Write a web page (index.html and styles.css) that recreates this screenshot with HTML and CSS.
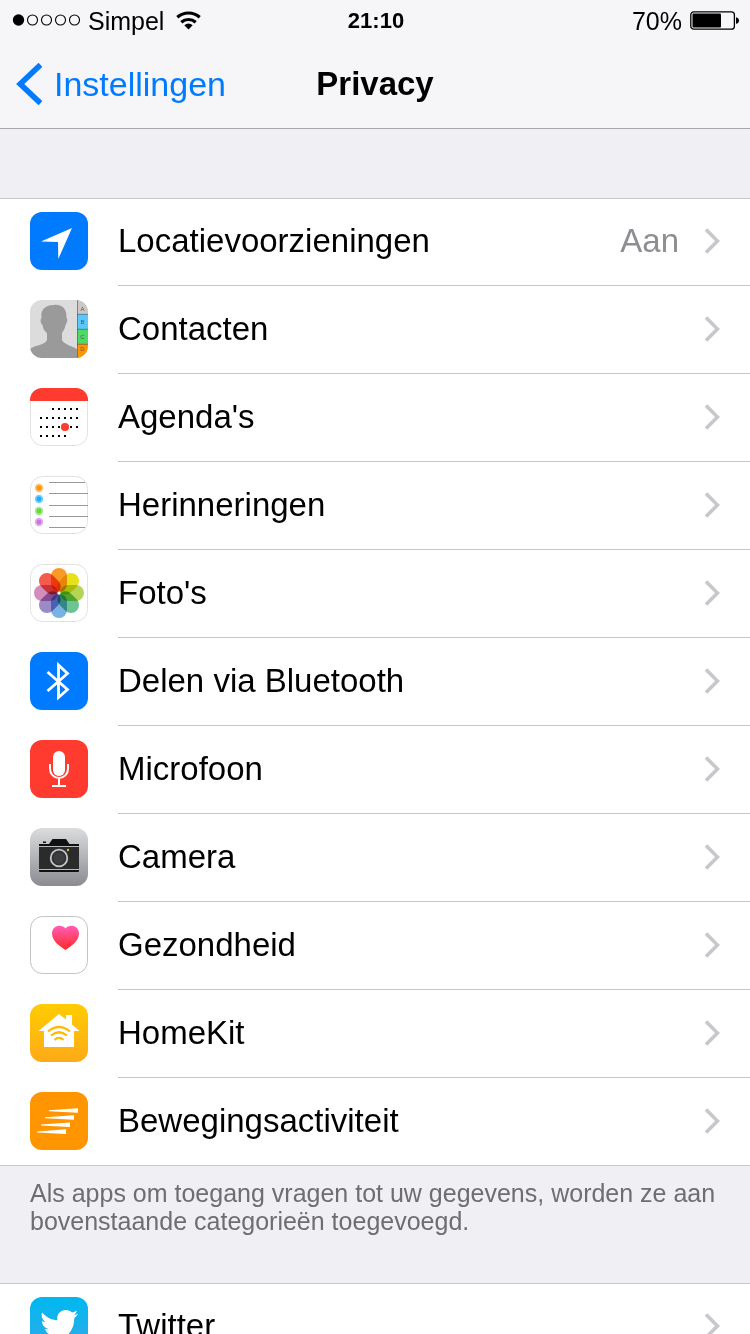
FILE: index.html
```html
<!DOCTYPE html>
<html lang="nl">
<head>
    <meta charset="UTF-8">
    <meta name="viewport" content="width=device-width, initial-scale=1.0">
    <title>Privacy</title>
    <link rel="stylesheet" href="styles.css">
</head>
<body>
    <!-- Shared shapes -->
    <svg class="sprite" aria-hidden="true">
        <symbol id="chevron" viewBox="0 0 16 26">
            <path d="M2 1.5 L13.5 13 L2 24.5" fill="none" stroke="#c7c7cc" stroke-width="3.6"/>
        </symbol>
    </svg>

    <!-- Header -->
    <header class="header">
        <div class="status-bar">
            <div class="carrier">
                <svg class="signal" width="68" height="14" viewBox="0 0 68 14">
                    <circle cx="6.5" cy="6" r="5.7"/>
                    <g fill="none" stroke="#000" stroke-width="1.1">
                        <circle cx="20.5" cy="6" r="5"/>
                        <circle cx="34.5" cy="6" r="5"/>
                        <circle cx="48.5" cy="6" r="5"/>
                        <circle cx="62.5" cy="6" r="5"/>
                    </g>
                </svg>
                <span>Simpel</span>
                <svg class="wifi" width="26" height="20" viewBox="0 0 26 20">
                    <g fill="none" stroke="#000" stroke-width="3.2">
                        <path d="M1.3 6.2 A17 17 0 0 1 23.700 6.2"/>
                        <path d="M5.300 11.200 A11 11 0 0 1 19.700 11.200"/>
                    </g>
                    <path d="M12.500 18.500 L8.300 14.300 A6.5 6.5 0 0 1 16.700 14.300 Z"/>
                </svg>
            </div>
            <span class="clock">21:10</span>
            <div class="battery">
                <span>70%</span>
                <svg width="50" height="20" viewBox="0 0 50 20">
                    <rect x="0.8" y="0.8" width="43.6" height="17.4" rx="3" fill="none" stroke="#000" stroke-width="1.3"/>
                    <rect x="2.5" y="2.5" width="28.5" height="14" rx="1"/>
                    <path d="M46 6.2 C50 6.6 50 12.4 46 12.8 Z"/>
                </svg>
            </div>
        </div>
        <nav class="nav-bar">
            <a class="back" href="#">
                <svg width="26" height="42" viewBox="0 0 26 42">
                    <path d="M24.5 1.800 L4.200 21 L24.5 40.200" fill="none" stroke="#007aff" stroke-width="5.6"/>
                </svg>
                <span>Instellingen</span>
            </a>
            <h1>Privacy</h1>
        </nav>
    </header>

    <!-- Settings list -->
    <main>
        <ul class="group">
            <li><a class="row" href="#">
                <svg class="icon" viewBox="0 0 58 58">
                    <rect width="58" height="58" rx="12" fill="#007aff"/>
                    <path d="M42 16 L11 29.5 L28 30 L28.3 47 Z" fill="#fff"/>
                </svg>
                <span class="cell"><span class="label">Locatievoorzieningen</span><span class="value">Aan</span>
                <svg class="chevron"><use href="#chevron"/></svg></span>
            </a></li>
            <li><a class="row" href="#">
                <svg class="icon" viewBox="0 0 58 58">
                    <clipPath id="tile"><rect width="58" height="58" rx="12"/></clipPath>
                    <g clip-path="url(#tile)">
                        <rect width="58" height="58" fill="#dcdcdc"/>
                        <path d="M24 5 C32 4 37 9 36.5 18 C38 19 37 23 35.5 25 C35 29 33 31 32 33 V40 C34 45 44 46 48 50 V58 H0 V49 C5 45 15 45 17 40 V33 C14 31 13 28 12.5 25 C10.500 23 10 19 11.5 18 C10 9 16 5 24 5 Z" fill="#9a9a9a"/>
                        <rect x="47" width="11" height="14" fill="#cbc8c5"/>
                        <rect x="47" y="14" width="11" height="15" fill="#5ac8fa"/>
                        <rect x="47" y="29" width="11" height="15" fill="#4cd964"/>
                        <rect x="47" y="44" width="11" height="14" fill="#ff9500"/>
                        <path d="M47.500 0 V58 M47 14.300 H58 M47 29.300 H58 M47 44.300 H58" stroke="#555" stroke-opacity="0.6" stroke-width="1"/>
                        <g class="tab-letters">
                            <text x="52.500" y="11">A</text>
                            <text x="52.500" y="24">B</text>
                            <text x="52.500" y="39">C</text>
                            <text x="52.500" y="51">D</text>
                        </g>
                    </g>
                </svg>
                <span class="cell"><span class="label">Contacten</span>
                <svg class="chevron"><use href="#chevron"/></svg></span>
            </a></li>
            <li><a class="row" href="#">
                <svg class="icon" viewBox="0 0 58 58">
                    <rect x="0.5" y="0.5" width="57" height="57" rx="12" fill="#fff" stroke="#e2e2e4"/>
                    <path d="M0 13 V12 A12 12 0 0 1 12 0 H46 A12 12 0 0 1 58 12 V13 Z" fill="#ff3b30"/>
                    <g stroke="#000" stroke-width="2" stroke-dasharray="2 4">
                        <path d="M22 21 H48"/>
                        <path d="M10 30 H48"/>
                        <path d="M10 39 H48"/>
                        <path d="M10 48 H36"/>
                    </g>
                    <circle cx="35" cy="39" r="4.100" fill="#ff3b30"/>
                </svg>
                <span class="cell"><span class="label">Agenda's</span>
                <svg class="chevron"><use href="#chevron"/></svg></span>
            </a></li>
            <li><a class="row" href="#">
                <svg class="icon" viewBox="0 0 58 58">
                    <rect x="0.5" y="0.5" width="57" height="57" rx="12" fill="#fff" stroke="#e2e2e4"/>
                    <path d="M19 6.500 H55 M19 17.500 H58 M19 29.500 H58 M19 40.500 H58 M19 51.500 H55" stroke="#999" stroke-width="1"/>
                    <g fill-opacity="0.6">
                        <circle cx="9" cy="12" r="4.200" fill="#ff9500"/>
                        <circle cx="9" cy="23" r="4.200" fill="#1badf8"/>
                        <circle cx="9" cy="35" r="4.200" fill="#63da38"/>
                        <circle cx="9" cy="46" r="4.200" fill="#cc73e1"/>
                    </g>
                    <circle cx="9" cy="12" r="2.400" fill="#ff9500"/>
                    <circle cx="9" cy="23" r="2.400" fill="#1badf8"/>
                    <circle cx="9" cy="35" r="2.400" fill="#63da38"/>
                    <circle cx="9" cy="46" r="2.400" fill="#cc73e1"/>
                </svg>
                <span class="cell"><span class="label">Herinneringen</span>
                <svg class="chevron"><use href="#chevron"/></svg></span>
            </a></li>
            <li><a class="row" href="#">
                <svg class="icon" viewBox="0 0 58 58">
                    <rect x="0.5" y="0.5" width="57" height="57" rx="12" fill="#fff" stroke="#e2e2e4"/>
                    <g class="petals">
                        <rect x="21" y="4" width="16" height="24" rx="8" fill="#f99a28"/>
                        <rect x="21" y="4" width="16" height="24" rx="8" fill="#e9e01c" transform="rotate(45 29 29)"/>
                        <rect x="21" y="4" width="16" height="24" rx="8" fill="#b5d655" transform="rotate(90 29 29)"/>
                        <rect x="21" y="4" width="16" height="24" rx="8" fill="#6cc394" transform="rotate(135 29 29)"/>
                        <rect x="21" y="4" width="16" height="24" rx="8" fill="#78b2e2" transform="rotate(180 29 29)"/>
                        <rect x="21" y="4" width="16" height="24" rx="8" fill="#9a8bc7" transform="rotate(225 29 29)"/>
                        <rect x="21" y="4" width="16" height="24" rx="8" fill="#d48cbb" transform="rotate(270 29 29)"/>
                        <rect x="21" y="4" width="16" height="24" rx="8" fill="#f45b4c" transform="rotate(315 29 29)"/>
                    </g>
                    <circle cx="29" cy="29" r="1.500" fill="#fff"/>
                </svg>
                <span class="cell"><span class="label">Foto's</span>
                <svg class="chevron"><use href="#chevron"/></svg></span>
            </a></li>
            <li><a class="row" href="#">
                <svg class="icon" viewBox="0 0 58 58">
                    <rect width="58" height="58" rx="12" fill="#007aff"/>
                    <path d="M17.500 20 L37.500 37.500 L28.500 45.500 V13 L37.500 21.500 L17.500 39" fill="none" stroke="#fff" stroke-width="2.800"/>
                </svg>
                <span class="cell"><span class="label">Delen via Bluetooth</span>
                <svg class="chevron"><use href="#chevron"/></svg></span>
            </a></li>
            <li><a class="row" href="#">
                <svg class="icon" viewBox="0 0 58 58">
                    <rect width="58" height="58" rx="12" fill="#ff3b30"/>
                    <rect x="23" y="11" width="12" height="25" rx="6" fill="#fff"/>
                    <path d="M20 24 V29 A9 9 0 0 0 38 29 V24 M29 38 V46 M22 46 H36" fill="none" stroke="#fff" stroke-width="2"/>
                </svg>
                <span class="cell"><span class="label">Microfoon</span>
                <svg class="chevron"><use href="#chevron"/></svg></span>
            </a></li>
            <li><a class="row" href="#">
                <svg class="icon" viewBox="0 0 58 58">
                    <linearGradient id="steel" x2="0" y2="1">
                        <stop offset="0" stop-color="#dbdcdd"/>
                        <stop offset="1" stop-color="#8a8c92"/>
                    </linearGradient>
                    <rect width="58" height="58" rx="12" fill="url(#steel)"/>
                    <path d="M9 18 V16 H19 L22.500 11 H36 L39.500 16 H49 V18 Z M13 13.500 H16 V15 H13 Z" fill="#111"/>
                    <rect x="9" y="19" width="40" height="22" fill="#2b2b2b"/>
                    <path d="M9 18.500 H49 M9 41.500 H49" stroke="#b9babc" stroke-width="1"/>
                    <path d="M9 42 H49 V43 Q49 44 48 44 H10 Q9 44 9 43 Z" fill="#111"/>
                    <circle cx="29" cy="30" r="8.300" fill="#333" stroke="#c4c5c8" stroke-width="1.800"/>
                    <circle cx="29" cy="30" r="5.500" fill="#3c3d3f"/>
                    <circle cx="38" cy="22" r="1.200" fill="#d8b84a"/>
                </svg>
                <span class="cell"><span class="label">Camera</span>
                <svg class="chevron"><use href="#chevron"/></svg></span>
            </a></li>
            <li><a class="row" href="#">
                <svg class="icon" viewBox="0 0 58 58">
                    <linearGradient id="heart" x2="0" y2="1">
                        <stop offset="0" stop-color="#ff5db8"/>
                        <stop offset="1" stop-color="#ff2a24"/>
                    </linearGradient>
                    <rect x="0.5" y="0.5" width="57" height="57" rx="12" fill="#fff" stroke="#c4c4c6"/>
                    <path d="M35.500 34 C31 31 22 25.500 22 17.500 C22 9 32 7.500 35.500 12.500 C39 7.500 49 9 49 17.500 C49 25.500 40 31 35.500 34 Z" fill="url(#heart)"/>
                </svg>
                <span class="cell"><span class="label">Gezondheid</span>
                <svg class="chevron"><use href="#chevron"/></svg></span>
            </a></li>
            <li><a class="row" href="#">
                <svg class="icon" viewBox="0 0 58 58">
                    <linearGradient id="home" x2="0" y2="1">
                        <stop offset="0" stop-color="#ffcc00"/>
                        <stop offset="1" stop-color="#fdaa18"/>
                    </linearGradient>
                    <rect width="58" height="58" rx="12" fill="url(#home)"/>
                    <path d="M29 10 L36 15.500 V11 H42 V20.500 L49.500 27 H44 V43 H14 V27 H8.500 Z" fill="#fff"/>
                    <g fill="none" stroke="#fdb90c" stroke-width="2.200">
                        <path d="M18 27.500 Q29 18.500 40 27.500"/>
                        <path d="M21 31.500 Q29 25 37 31.500"/>
                        <path d="M24.500 35.800 Q29 32 33.500 35.800"/>
                    </g>
                </svg>
                <span class="cell"><span class="label">HomeKit</span>
                <svg class="chevron"><use href="#chevron"/></svg></span>
            </a></li>
            <li><a class="row" href="#">
                <svg class="icon" viewBox="0 0 58 58">
                    <rect width="58" height="58" rx="12" fill="#ff9500"/>
                    <path d="M19 18.300 L48 16.200 V20.800 L19 19.300 Z M15 25.300 L44 23.200 V27.800 L15 26.300 Z M11 32.500 L40 30.400 V35 L11 33.500 Z M7 39.400 L36 37.300 V41.900 L7 40.400 Z" fill="#fff"/>
                </svg>
                <span class="cell"><span class="label">Bewegingsactiviteit</span>
                <svg class="chevron"><use href="#chevron"/></svg></span>
            </a></li>
        </ul>
        <p class="note">Als apps om toegang vragen tot uw gegevens, worden ze aan bovenstaande categorieën toegevoegd.</p>

        <ul class="group">
            <li><a class="row" href="#">
                <svg class="icon" viewBox="0 0 58 58">
                    <linearGradient id="sky" x2="0" y2="1">
                        <stop offset="0" stop-color="#00b8f0"/>
                        <stop offset="1" stop-color="#35a9e8"/>
                    </linearGradient>
                    <rect width="58" height="58" rx="12" fill="url(#sky)"/>
                    <path d="M12 15.500 C16 20 21 23 27.500 23.300 C26 17 31 13 36 13 C38.500 13 40.500 14 42 15.500 C43.500 15.300 45.500 14.500 47 13.500 C46.500 15.500 45.500 16.800 44 17.800 C45.500 17.700 47 17.200 48 16.700 C47 18.500 46 19.700 44.300 21 C44.500 33 36 44 22.500 44 C18 44 14 42.700 11 40.800 C15 41.200 19 40 22 37.700 C18.500 37.500 16 35.300 15 32 C16 32.200 17.300 32.200 18.500 31.900 C14.500 31 12 27.700 12 24 C13 24.600 14.300 25 15.500 25 C12 22.500 11 19 12 15.500 Z" fill="#fff"/>
                </svg>
                <span class="cell"><span class="label">Twitter</span>
                <svg class="chevron"><use href="#chevron"/></svg></span>
            </a></li>
        </ul>
    </main>
</body>
</html>
```
FILE: styles.css
```css
* {
    margin: 0;
    padding: 0;
    box-sizing: border-box;
}

body {
    height: 100vh;
    overflow: hidden;
    background-color: #efeff4;
    color: #000;
    font-family: "Liberation Sans", Arial, sans-serif;
    font-size: 33px;
}

a {
    color: inherit;
    text-decoration: none;
}

ul {
    list-style: none;
}

.sprite {
    display: none;
}

.header {
    background-color: #f6f6f8;
    border-bottom: 1px solid #a7a7ab;
}

.status-bar {
    display: grid;
    grid-template-columns: 1fr auto 1fr;
    align-items: center;
    height: 40px;
    padding: 2px 10px 0 12px;
    font-size: 25px;
}

.carrier,
.battery {
    display: flex;
    align-items: center;
    gap: 8px;
}

.wifi {
    margin-left: 4px;
}

.battery {
    justify-content: flex-end;
}

.clock {
    font-size: 22px;
    font-weight: bold;
}

.nav-bar {
    display: grid;
    grid-template-columns: 1fr auto 1fr;
    align-items: center;
    height: 88px;
    padding: 0 16px;
}

.back {
    display: flex;
    align-items: center;
    gap: 12px;
    color: #007aff;
    font-size: 34px;
}

h1 {
    font-size: 33px;
}

main {
    padding-top: 69px;
}

.group {
    background-color: #fff;
    box-shadow: inset 0 1px #c8c7cc;
}

.row {
    display: flex;
    align-items: flex-start;
    gap: 30px;
    height: 88px;
    padding-left: 30px;
}

.icon {
    flex: none;
    width: 58px;
    height: 58px;
    margin-top: 14px;
}

.cell {
    display: flex;
    flex: 1;
    align-items: center;
    height: 88px;
    padding: 0 30px 2px 0;
    border-bottom: 1px solid #c8c7cc;
}

.label {
    flex: 1;
}

.value {
    margin-right: 25px;
    color: #8e8e93;
}

.chevron {
    width: 16px;
    height: 26px;
}

/* the last line runs the full width */
.group li:last-child {
    border-bottom: 1px solid #c8c7cc;
}

.group li:last-child .row,
.group li:last-child .cell {
    height: 87px;
    border-bottom: 0;
}

.note {
    padding: 13px 30px 48px;
    color: #6d6d72;
    font-size: 25px;
    line-height: 28px;
}

.petals rect {
    mix-blend-mode: multiply;
}

.tab-letters {
    font-size: 6px;
    text-anchor: middle;
    fill: #555;
}
```
